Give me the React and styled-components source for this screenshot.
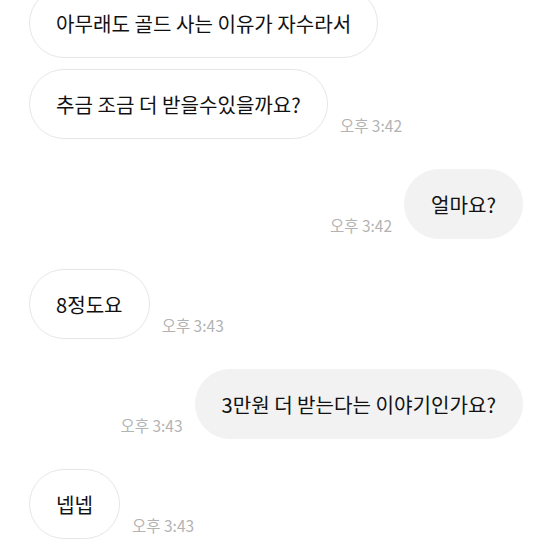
import React from "react";
import styled, { createGlobalStyle } from "styled-components";

const Global = createGlobalStyle`
  html, body { margin: 0; padding: 0; background: #ffffff; }
  body { font-family: "Noto Sans CJK KR", "Noto Sans", sans-serif; overflow: hidden; }
`;

const Chat = styled.div`
  display: flex;
  flex-direction: column;
  margin-top: -12px;
  padding: 0 30px 0 29px;
`;

const Row = styled.div`
  display: flex;
  flex-direction: ${(p) => (p.$mine ? "row-reverse" : "row")};
  align-items: flex-end;
  gap: 12px;
  margin-top: ${(p) => (p.$cont ? "11px" : "30px")};
  &:first-child { margin-top: 0; }
`;

const Bubble = styled.div`
  box-sizing: border-box;
  height: 70px;
  display: flex;
  align-items: center;
  padding: 0 26px;
  border-radius: 35px;
  font-size: 20.1px;
  color: #111111;
  white-space: nowrap;
  background: ${(p) => (p.$mine ? "#f2f2f2" : "#ffffff")};
  border: 1px solid ${(p) => (p.$mine ? "#f2f2f2" : "#e6e6e6")};
`;

const Time = styled.span`
  font-size: 15.5px;
  color: #b3b3b3;
  white-space: nowrap;
  padding-bottom: 3px;
`;

const messages = [
  { text: "아무래도 골드 사는 이유가 자수라서" },
  { text: "추금 조금 더 받을수있을까요?", time: "오후 3:42", cont: true },
  { text: "얼마요?", time: "오후 3:42", mine: true },
  { text: "8정도요", time: "오후 3:43" },
  { text: "3만원 더 받는다는 이야기인가요?", time: "오후 3:43", mine: true },
  { text: "넵넵", time: "오후 3:43" },
];

export default function App() {
  return (
    <>
      <Global />
      <Chat>
        {messages.map((m, i) => (
          <Row key={i} $mine={m.mine} $cont={m.cont}>
            <Bubble $mine={m.mine}>{m.text}</Bubble>
            {m.time && <Time>{m.time}</Time>}
          </Row>
        ))}
      </Chat>
    </>
  );
}
